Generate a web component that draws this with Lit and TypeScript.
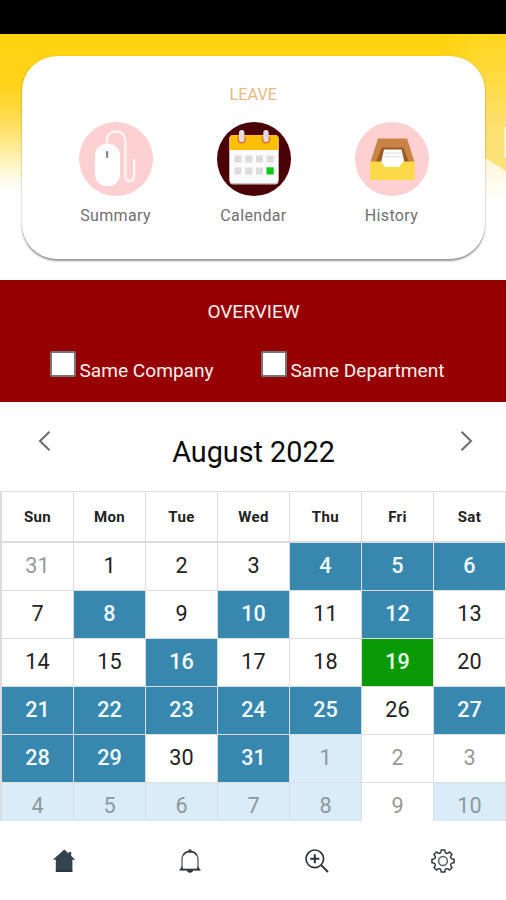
import { LitElement, html, css, svg } from "lit";
import { customElement, state } from "lit/decorators.js";
import { classMap } from "lit/directives/class-map.js";

type Kind = "plain" | "busy" | "today" | "out" | "out-busy";

interface Day {
  n: number;
  kind: Kind;
}

const BUSY = new Set([4, 5, 6, 8, 10, 12, 16, 21, 22, 23, 24, 25, 27, 28, 29, 31]);
const NEXT_BUSY = new Set([1, 4, 5, 6, 7, 8, 10]);

function buildDays(): Day[] {
  const days: Day[] = [{ n: 31, kind: "out" }];
  for (let n = 1; n <= 31; n++) {
    days.push({ n, kind: n === 19 ? "today" : BUSY.has(n) ? "busy" : "plain" });
  }
  for (let n = 1; n <= 10; n++) {
    days.push({ n, kind: NEXT_BUSY.has(n) ? "out-busy" : "out" });
  }
  return days;
}

const mouseIcon = svg`
  <circle cx="37" cy="37" r="37" fill="#fdd0d2"/>
  <path d="M28 23V18.5C28 12.5 32 9.5 37 9.5C43 9.5 46.3 14 46.3 20V53C46.3 57 48 59 50.7 59C53.4 59 55.2 57 55.2 53V38"
    fill="none" stroke="#fff6f5" stroke-width="2.3" stroke-linecap="round"/>
  <rect x="16" y="22" width="25" height="42" rx="11.5" fill="#fff"/>
  <rect x="27" y="29" width="2.2" height="7" rx="1.1" fill="#7f8791"/>`;

const calendarIcon = svg`
  <circle cx="37" cy="37" r="37" fill="#4b0206"/>
  <rect x="12.5" y="14" width="49" height="48.5" rx="3.5" fill="#c9c3c3"/>
  <rect x="12.5" y="13" width="49" height="48" rx="3.5" fill="#fbfbfb"/>
  <path d="M12.5 28V16.5A3.5 3.5 0 0 1 16 13H58A3.5 3.5 0 0 1 61.5 16.5V28Z" fill="#fdbf08"/>
  <g fill="#d9703a"><circle cx="24.7" cy="17.2" r="4.3"/><circle cx="49" cy="17.2" r="4.3"/></g>
  <g fill="#e3dce1"><rect x="22" y="8" width="5.4" height="12" rx="2.7"/><rect x="46.3" y="8" width="5.4" height="12" rx="2.7"/></g>
  <g fill="#dcdcdc">
    <rect x="17.5" y="33.5" width="7" height="7"/><rect x="28.3" y="33.5" width="7" height="7"/>
    <rect x="39" y="33.5" width="7" height="7"/><rect x="49.7" y="33.5" width="7" height="7"/>
    <rect x="17.5" y="45.5" width="7" height="7"/><rect x="28.3" y="45.5" width="7" height="7"/>
    <rect x="39" y="45.5" width="7" height="7"/>
  </g>
  <rect x="49.5" y="45.3" width="7.2" height="7.2" fill="#0dc917"/>`;

const trayIcon = svg`
  <circle cx="37" cy="37" r="37" fill="#fdd0d2"/>
  <path d="M23 16.5H52L59.5 40H15.5Z" fill="#c98345"/>
  <path d="M27 25.5H48.5L54 40H21Z" fill="#9a5a25"/>
  <path d="M29 27.5H46.5L50.5 45H25Z" fill="#fff"/>
  <path d="M29.5 31H46M28.5 34.8H47" stroke="#d3dce2" stroke-width="1"/>
  <path d="M15 39.5H26.3L29.5 44.5H44.5L47.7 39.5H59.5V58H15Z" fill="#fbd949"/>
  <path d="M28.5 41H46L43.5 44.8H31Z" fill="#fff"/>`;

const homeIcon = svg`
  <path d="M12.3 0.6L16.6 4.6V3H19.2V7L23.4 10.8H20.4V22.6H3.8V10.8H0.8Z" fill="#33444f"/>
  <path d="M3.8 22.2H20.4" stroke="#14202c" stroke-width="1.2"/>`;

const bellIcon = svg`
  <path d="M4 20V10.2C4 5.6 7.2 2.6 12 2.6S20 5.6 20 10.2V20" fill="none" stroke="#6a6e73" stroke-width="1.5"/>
  <path d="M5.2 6.4C6.6 3.9 9 2.6 12 2.6S17.4 3.9 18.8 6.4" fill="none" stroke="#333940" stroke-width="1.5"/>
  <circle cx="12" cy="2" r="1.7" fill="#333940"/>
  <path d="M1.6 21.2L4.2 17.8V20H19.8V17.8L22.4 21.2Z" fill="#2b3138" stroke="#2b3138" stroke-width=".6"/>
  <path d="M9 21.3A3 2.4 0 0 0 15 21.3Z" fill="#2b3138"/>`;

const zoomIcon = svg`
  <g fill="none" stroke="#2d3137">
    <circle cx="9.8" cy="9.8" r="8.8" stroke-width="1.7"/>
    <path d="M9.8 5.3V14.3M5.3 9.8H14.3" stroke-width="2"/>
    <path d="M15.9 15.9L23 23" stroke-width="2"/>
  </g>`;

/* Eight outward lobes with rounded flanks, centred in a 24-unit box. */
const gearPath = (() => {
  const at = (r: number, deg: number) => {
    const a = (deg * Math.PI) / 180;
    return `${(12 + r * Math.cos(a)).toFixed(2)} ${(12 + r * Math.sin(a)).toFixed(2)}`;
  };
  let d = "";
  for (let i = 0; i < 8; i++) {
    const mid = i * 45;
    d += `${i ? "L" : "M"}${at(11.2, mid - 9)}L${at(11.2, mid + 9)}`;
    d += `L${at(9.3, mid + 13)}Q${at(7.6, mid + 22.5)} ${at(9.3, mid + 32)}`;
  }
  return `${d}Z`;
})();

const gearIcon = svg`
  <g fill="none" stroke="#34383d" stroke-width="1.5" stroke-linejoin="round">
    <path d=${gearPath}/>
    <circle cx="12" cy="12" r="4.4" stroke="#5b5f63"/>
  </g>`;

@customElement("leave-header")
class LeaveHeader extends LitElement {
  static styles = css`
    :host {
      display: block;
      position: relative;
      box-sizing: border-box;
      height: 246px;
      padding: 21.5px 21px 0 21.5px;
      background: linear-gradient(
        180deg,
        #ffd30f 0,
        #fed31a 50px,
        #ffd835 70px,
        #ffe168 95px,
        #ffefa8 120px,
        #fffae4 143px,
        #fff 158px
      );
    }
    .shade {
      position: absolute;
      right: 0;
      top: 0;
      width: 60px;
      height: 180px;
    }
    .card {
      position: relative;
      box-sizing: border-box;
      height: 203px;
      padding-top: 28px;
      border-radius: 35px;
      background: #fff;
      box-shadow: 0 1.5px 2px rgba(0, 0, 0, 0.42);
      display: flex;
      flex-direction: column;
      align-items: center;
    }
    .title {
      font-size: 16.2px;
      line-height: 22px;
      color: #ebb983;
    }
    .items {
      display: grid;
      grid-template-columns: repeat(3, 138px);
      margin: 16px 0 0 0.5px;
    }
    .item {
      display: flex;
      flex-direction: column;
      align-items: center;
      gap: 9px;
      font-size: 16px;
      line-height: 22px;
      letter-spacing: 0.35px;
      color: #707070;
    }
    .pic {
      width: 74px;
      height: 74px;
      display: block;
    }
  `;

  render() {
    const items = [
      { label: "Summary", icon: mouseIcon },
      { label: "Calendar", icon: calendarIcon },
      { label: "History", icon: trayIcon },
    ];
    return html`<svg class="shade" viewBox="0 0 60 180">
        <defs>
          <linearGradient id="band" x1="0" y1="0" x2="0" y2="1">
            <stop offset="0" stop-color="#ffd71f" />
            <stop offset="0.35" stop-color="#fedb45" />
            <stop offset="0.7" stop-color="#fce173" />
            <stop offset="1" stop-color="#fbe27a" />
          </linearGradient>
          <linearGradient id="tail" x1="0" y1="0" x2="0" y2="1">
            <stop offset="0" stop-color="#fff2bd" />
            <stop offset="0.4" stop-color="#fff8de" />
            <stop offset="1" stop-color="#fff" />
          </linearGradient>
          <linearGradient id="ease" x1="0" x2="1">
            <stop offset="0" stop-color="#fff" stop-opacity="0" />
            <stop offset="0.6" stop-color="#fff" />
          </linearGradient>
          <mask id="side"><rect width="60" height="180" fill="url(#ease)" /></mask>
        </defs>
        <g mask="url(#side)">
          <rect y="110" width="60" height="60" fill="url(#tail)" />
          <path d="M0 0H60V137L36 122L0 100Z" fill="url(#band)" />
          <rect x="58.5" y="93" width="3" height="31" rx="1" fill="#fffbe6" />
        </g>
      </svg>
      <section class="card">
        <div class="title">LEAVE</div>
        <div class="items">
          ${items.map(
            (i) => html`<div class="item">
              <svg class="pic" viewBox="0 0 74 74">${i.icon}</svg>
              <span>${i.label}</span>
            </div>`,
          )}
        </div>
      </section>`;
  }
}

@customElement("overview-filter")
class OverviewFilter extends LitElement {
  static styles = css`
    :host {
      display: block;
      box-sizing: border-box;
      height: 122px;
      padding-top: 20px;
      background: #960000;
      color: #fff0f0;
      font-size: 19.1px;
    }
    .title {
      text-align: center;
      font-size: 19px;
      line-height: 24px;
      padding-left: 1px;
    }
    .checks {
      display: grid;
      grid-template-columns: 211px 1fr;
      padding-left: 49.5px;
      margin-top: 26px;
    }
    .check {
      display: flex;
      align-items: flex-start;
      gap: 4px;
      line-height: 24px;
      white-space: nowrap;
    }
    .box {
      box-sizing: border-box;
      width: 26px;
      height: 26px;
      border: 2px solid #767676;
      border-radius: 2px;
      background: #fff;
      margin-top: 1px;
    }
    .text {
      margin-top: 9px;
    }
  `;

  render() {
    return html`<div class="title">OVERVIEW</div>
      <div class="checks">
        ${["Same Company", "Same Department"].map(
          (t) => html`<div class="check"><span class="box"></span><span class="text">${t}</span></div>`,
        )}
      </div>`;
  }
}

@customElement("month-calendar")
class MonthCalendar extends LitElement {
  @state() private days = buildDays();

  static styles = css`
    :host {
      display: block;
      height: 419px;
      overflow: hidden;
      color: #222;
    }
    .bar {
      height: 89px;
      display: flex;
      justify-content: space-between;
      padding: 0 33px 0 38px;
    }
    .arrow {
      width: 13px;
      height: 22px;
      margin-top: 28px;
      fill: none;
      stroke: #6b6b6b;
      stroke-width: 2;
    }
    .month {
      margin: 33px 4px 0 0;
      font-size: 28.8px;
      line-height: 34px;
      color: #0c0c0c;
    }
    .grid {
      display: grid;
      grid-template-columns: repeat(7, 72px);
      border: 1px solid #ddd;
      border-bottom: 0;
      width: 504px;
    }
    .cell {
      box-sizing: border-box;
      height: 48px;
      padding-bottom: 2px;
      border-left: 1px solid #ddd;
      border-bottom: 1px solid #ddd;
      display: flex;
      align-items: center;
      justify-content: center;
      font-size: 21.6px;
      letter-spacing: 0;
    }
    .head {
      height: 51px;
      padding-bottom: 0;
      border-bottom-width: 2px;
      font-size: 15px;
      font-weight: 700;
      letter-spacing: 0.4px;
    }
    .busy {
      background: #3787ae;
      color: #f2fbff;
      font-weight: 500;
    }
    .today {
      background: #099a05;
      color: #eaffea;
      font-weight: 500;
    }
    .out {
      color: #999;
    }
    .out-busy {
      background: #d9ecf7;
      color: #8d989e;
      border-color: #d5dfe6;
    }
  `;

  render() {
    return html`<div class="bar">
        <svg class="arrow" viewBox="0 0 13 22"><path d="M11.5 1.8L2 11L11.5 20.2" /></svg>
        <div class="month">August 2022</div>
        <svg class="arrow" viewBox="0 0 13 22"><path d="M1.5 1.8L11 11L1.5 20.2" /></svg>
      </div>
      <div class="grid">
        ${["Sun", "Mon", "Tue", "Wed", "Thu", "Fri", "Sat"].map((d) => html`<div class="cell head">${d}</div>`)}
        ${this.days.map((d) => html`<div class=${classMap({ cell: true, [d.kind]: true })}>${d.n}</div>`)}
      </div>`;
  }
}

@customElement("tab-bar")
class TabBar extends LitElement {
  static styles = css`
    :host {
      display: grid;
      grid-template-columns: repeat(4, 1fr);
      justify-items: center;
      height: 79px;
      padding: 28px 0 0 1px;
      box-sizing: border-box;
      background: #fff;
    }
    .icon {
      width: 24px;
      height: 24px;
    }
  `;

  render() {
    return html`${[homeIcon, bellIcon, zoomIcon, gearIcon].map(
      (i) => html`<svg class="icon" viewBox="0 0 24 24">${i}</svg>`,
    )}`;
  }
}

@customElement("app-root")
class AppRoot extends LitElement {
  static styles = css`
    :host {
      display: flex;
      flex-direction: column;
      width: 506px;
      height: 900px;
      overflow: hidden;
      background: #fff;
      font-family: Roboto, sans-serif;
    }
    .status {
      height: 34px;
      background: #000;
      flex: none;
    }
  `;

  render() {
    return html`<div class="status"></div>
      <leave-header></leave-header>
      <overview-filter></overview-filter>
      <month-calendar></month-calendar>
      <tab-bar></tab-bar>`;
  }
}
